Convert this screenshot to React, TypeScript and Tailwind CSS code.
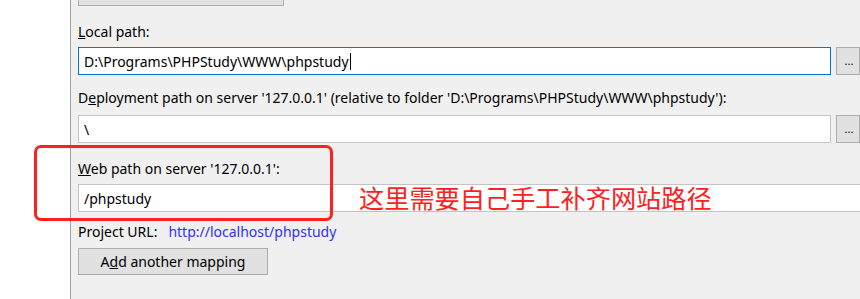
import React from "react";

const font = { fontFamily: '"Noto Sans", "Open Sans", sans-serif' };

export default function App() {
  return (
    <div className="w-[860px] h-[299px] flex bg-white overflow-hidden text-[14px] text-black" style={font}>
      <div className="w-[71px] shrink-0 bg-white border-r border-[#a0a0a0]" />
      <div className="relative flex-1 bg-[#f0f0f0] pl-[7px] flex flex-col">
        <div className="w-[206px] h-[28px] -mt-[22px] bg-[#e1e1e1] border border-[#adadad]" />
        <div className="h-[16px] mt-[18px] leading-[16px]">
          <span className="underline">L</span>ocal path:
        </div>
        <div className="flex mt-[7px] h-[28px]">
          <div className="w-[753px] h-[28px] bg-white border border-[#0078d7] flex items-center pl-[5px]">
            <span>D:\Programs\PHPStudy\WWW\phpstudy</span>
            <span className="inline-block w-px h-[17px] bg-black ml-px" />
          </div>
          <div className="ml-[5px] flex-1 h-[28px] bg-[#e1e1e1] border border-[#adadad] flex items-center justify-center pl-[2px] text-[11px]">
            ...
          </div>
        </div>
        <div className="h-[16px] mt-[15px] leading-[16px] whitespace-nowrap">
          D<span className="underline">e</span>ployment path on server '127.0.0.1' (relative to folder 'D:\Programs\PHPStudy\WWW\phpstudy'):
        </div>
        <div className="flex mt-[9px] h-[28px]">
          <div className="w-[753px] h-[28px] bg-white border border-[#c4c4c4] flex items-center pl-[5px]">
            <span>\</span>
          </div>
          <div className="ml-[5px] flex-1 h-[28px] bg-[#e1e1e1] border border-[#adadad] flex items-center justify-center pl-[2px] text-[11px]">
            ...
          </div>
        </div>
        <div className="h-[16px] mt-[18px] leading-[16px]">
          <span className="underline">W</span>eb path on server '127.0.0.1':
        </div>
        <div className="mt-[7px] h-[28px] bg-white border border-[#c4c4c4] border-r-0 flex items-center pl-[5px]">
          <span>/phpstudy</span>
        </div>
        <div className="h-[16px] mt-[12px] leading-[16px] flex">
          <span>Project URL:</span>
          <span className="ml-[11px] text-[#2f2fff]">http://localhost/phpstudy</span>
        </div>
        <div className="mt-[8px] w-[190px] h-[27px] bg-[#e1e1e1] border border-[#adadad] flex items-center justify-center">
          <span>
            A<span className="underline">d</span>d another mapping
          </span>
        </div>

        <div className="absolute left-[-37px] top-[145px] w-[299px] h-[76px] border-[3px] border-[#ff2121] rounded-[7px]" />
        <div
          className="absolute left-[288px] top-[180px] text-[25.2px] leading-[34px] text-[#ff2121] whitespace-nowrap"
          style={{ fontFamily: '"Noto Sans CJK SC", sans-serif' }}
        >
          这里需要自己手工补齐网站路径
        </div>
      </div>
    </div>
  );
}
